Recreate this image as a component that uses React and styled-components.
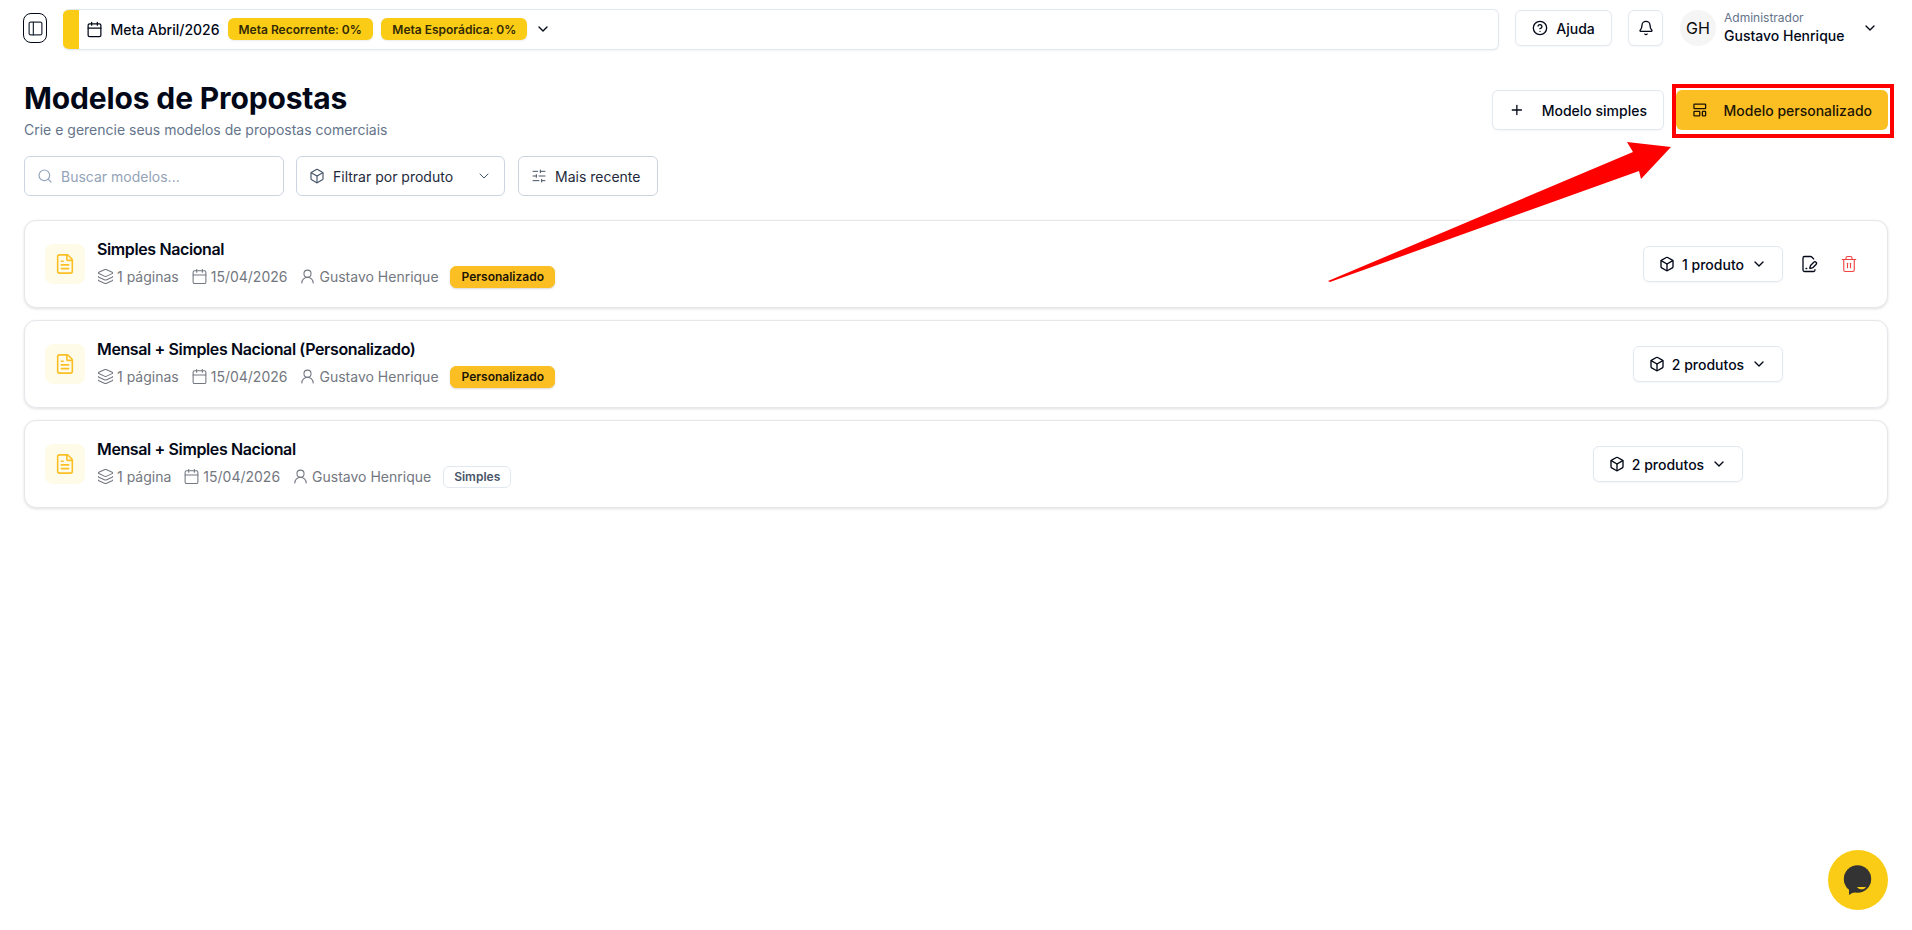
import React from "react";
import styled, { createGlobalStyle } from "styled-components";
import {
  PanelLeft, Calendar, ChevronDown, CircleHelp, Bell, Plus, LayoutTemplate, Search, Box,
  SlidersHorizontal, FileText, Layers, UserRound, FilePenLine, Trash2,
} from "lucide-react";

const Global = createGlobalStyle`
  html, body { margin: 0; padding: 0; background: #fff; }
  body { font-family: Inter, "Liberation Sans", sans-serif; color: #020817; height: 930px; overflow: hidden; }
  * { box-sizing: border-box; }
`;

const Page = styled.div`
  position: relative;
  width: 1912px;
  height: 930px;
  background: #fff;
`;

const Header = styled.header`
  display: flex;
  align-items: center;
  height: 56px;
  padding: 0 34px 0 23px;
`;

const ToggleButton = styled.button`
  display: flex;
  align-items: center;
  justify-content: center;
  flex: none;
  width: 24px;
  height: 30px;
  padding: 0;
  margin-right: 16px;
  background: #fff;
  border: 1px solid #020817;
  border-radius: 8px;
  color: #27303f;
`;

const GoalBar = styled.div`
  flex: 1;
  display: flex;
  align-items: center;
  height: 41px;
  margin-top: 2px;
  border: 1px solid #e2e8f0;
  border-left: 0;
  border-radius: 6px;
  overflow: hidden;
  box-shadow: 0 1px 2px rgba(0, 0, 0, 0.05);
`;

const GoalStripe = styled.span`
  width: 16px;
  align-self: stretch;
  margin: -1px 7px -1px 0;
  background: #facc15;
`;

const GoalLabel = styled.span`
  display: flex;
  align-items: center;
  gap: 7.5px;
  font-size: 14px;
  font-weight: 500;
  color: #020817;
  margin-right: 8px;
`;

const GoalBadge = styled.span`
  display: flex;
  align-items: center;
  height: 22px;
  padding: 0 11px;
  margin-right: 8.5px;
  border-radius: 6px;
  background: #facc15;
  color: #332a04;
  font-size: 12px;
  font-weight: 600;
  box-shadow: 0 1px 2px rgba(0, 0, 0, 0.08);
`;

const GoalChevron = styled.span`
  display: flex;
  margin-left: -1px;
  color: #020817;
`;

const OutlineButton = styled.button`
  display: flex;
  align-items: center;
  justify-content: center;
  gap: ${(p) => p.$gap || 8}px;
  height: ${(p) => p.$h || 36}px;
  padding: 0 ${(p) => p.$pad ?? 16}px;
  background: #fff;
  border: 1px solid #e2e8f0;
  border-radius: 6px;
  font-family: inherit;
  font-size: 14px;
  font-weight: 500;
  color: #020817;
  white-space: nowrap;
  box-shadow: 0 1px 2px rgba(0, 0, 0, 0.04);
`;

const HelpButton = styled(OutlineButton)`
  width: 97px;
  margin-left: 16px;
`;

const BellButton = styled(OutlineButton)`
  width: 35px;
  margin-left: 16px;
`;

const UserArea = styled.div`
  display: flex;
  align-items: center;
  margin-left: 17px;
`;

const Avatar = styled.span`
  display: flex;
  align-items: center;
  justify-content: center;
  width: 36px;
  height: 36px;
  border-radius: 50%;
  background: #f5f5f5;
  font-size: 16px;
  color: #0a0a0a;
`;

const UserText = styled.div`
  display: flex;
  flex-direction: column;
  width: 138px;
  margin-left: 8px;
`;

const UserRole = styled.span`
  font-size: 12px;
  line-height: 16px;
  color: #64748b;
`;

const UserName = styled.span`
  font-size: 14px;
  line-height: 20px;
  font-weight: 500;
  color: #020817;
`;

const Main = styled.main`
  padding: 0 24px;
`;

const TitleRow = styled.div`
  display: flex;
  justify-content: space-between;
  align-items: flex-start;
  padding-top: 24px;
`;

const Title = styled.h1`
  margin: 0;
  font-size: 30px;
  line-height: 36px;
  font-weight: 700;
  letter-spacing: -0.15px;
  color: #020817;
`;

const Subtitle = styled.p`
  margin: 4px 0 0;
  font-size: 14px;
  line-height: 20px;
  color: #64748b;
`;

const TitleActions = styled.div`
  display: flex;
  gap: 12px;
  padding-top: 10px;
`;

const SimpleButton = styled(OutlineButton)`
  width: 172px;
  gap: 17px;
`;

const Highlighted = styled.div`
  position: relative;
  &::after {
    content: "";
    position: absolute;
    left: -4px;
    right: -6px;
    top: -6px;
    bottom: -8px;
    border: 4px solid #ff0000;
    pointer-events: none;
  }
`;

const PrimaryButton = styled.button`
  display: flex;
  align-items: center;
  gap: 16px;
  width: 212px;
  height: 40px;
  padding: 0 16px;
  border: 0;
  border-radius: 6px;
  background: #fbbf24;
  font-family: inherit;
  font-size: 14px;
  font-weight: 500;
  color: #1c1503;
  white-space: nowrap;
`;

const Toolbar = styled.div`
  display: flex;
  gap: 12px;
  margin-top: 16px;
`;

const SearchBox = styled.div`
  display: flex;
  align-items: center;
  gap: 8px;
  width: 260px;
  height: 40px;
  padding: 0 12px;
  border: 1px solid #cbd5e1;
  border-radius: 6px;
  font-size: 14px;
  color: #94a3b8;
`;

const FilterSelect = styled.div`
  display: flex;
  align-items: center;
  width: 209px;
  height: 40px;
  padding: 0 12px;
  border: 1px solid #cbd5e1;
  border-radius: 6px;
  font-size: 14px;
  color: #1e293b;
  svg { color: #475569; flex: none; }
`;

const FilterText = styled.span`
  flex: 1;
  margin-left: 8px;
`;

const SortButton = styled.div`
  display: flex;
  align-items: center;
  gap: 8px;
  width: 140px;
  height: 40px;
  margin-left: 1px;
  padding: 0 12px;
  border: 1px solid #cbd5e1;
  border-radius: 6px;
  font-size: 14px;
  color: #1e293b;
  svg { color: #475569; }
`;

const CardList = styled.div`
  display: flex;
  flex-direction: column;
  gap: 12px;
  margin-top: 24px;
`;

const Card = styled.article`
  display: flex;
  align-items: center;
  height: 88px;
  padding: 0 21px 0 20px;
  border: 1px solid #e5e7eb;
  border-radius: 12px;
  background: #fff;
  box-shadow: 0 1px 3px rgba(0, 0, 0, 0.12);
`;

const DocIcon = styled.span`
  display: flex;
  align-items: center;
  justify-content: center;
  width: 40px;
  height: 40px;
  flex: none;
  border-radius: 8px;
  background: #fefce8;
  color: #fbbf24;
`;

const CardBody = styled.div`
  flex: 1;
  margin-left: 12px;
  padding-bottom: 3.5px;
`;

const CardTitle = styled.h3`
  margin: 0;
  font-size: 16px;
  line-height: 24px;
  font-weight: 600;
  letter-spacing: -0.38px;
  color: #020817;
`;

const MetaRow = styled.div`
  display: flex;
  align-items: center;
  gap: 12px;
  margin-top: 4.5px;
  font-size: 14px;
  color: #737780;
`;

const MetaItem = styled.span`
  display: flex;
  align-items: center;
  gap: 3px;
`;

const TypeBadge = styled.span`
  display: flex;
  align-items: center;
  height: 22px;
  padding: 0 10px 0 ${(p) => (p.$custom ? 10.5 : 10)}px;
  margin-left: ${(p) => (p.$custom ? -0.5 : 0)}px;
  border-radius: 6px;
  font-size: 12px;
  font-weight: 600;
  background: ${(p) => (p.$custom ? "#fbbf24" : "#fff")};
  color: ${(p) => (p.$custom ? "#1c1503" : "#475569")};
  border: 1px solid ${(p) => (p.$custom ? "#fbbf24" : "#e2e8f0")};
  box-shadow: ${(p) => (p.$custom ? "0 1px 2px rgba(0,0,0,.15)" : "none")};
`;

const ProductButton = styled(OutlineButton)`
  width: ${(p) => p.$w}px;
  gap: 7px;
  padding: 0;
`;

const Actions = styled.div`
  display: flex;
  gap: 8px;
  flex: none;
  width: ${(p) => p.$w}px;
  padding-left: 10px;
`;

const IconAction = styled.button`
  display: flex;
  align-items: center;
  justify-content: center;
  width: 32px;
  height: 32px;
  padding: 0;
  border: 0;
  background: transparent;
  color: ${(p) => (p.$danger ? "#ef4444" : "#020817")};
`;

const ChatFab = styled.button`
  position: absolute;
  left: 1828px;
  top: 850px;
  display: flex;
  align-items: center;
  justify-content: center;
  width: 60px;
  height: 60px;
  padding: 0;
  border: 0;
  border-radius: 50%;
  background: #facc15;
`;

const ArrowOverlay = styled.svg`
  position: absolute;
  left: 1320px;
  top: 135px;
  pointer-events: none;
`;

const models = [
  { title: "Simples Nacional", pages: "1 páginas", custom: true, product: "1 produto", w: 140, actions: true, slot: 83 },
  { title: "Mensal + Simples Nacional (Personalizado)", pages: "1 páginas", custom: true, product: "2 produtos", w: 150, slot: 83 },
  { title: "Mensal + Simples Nacional", pages: "1 página", custom: false, product: "2 produtos", w: 150, slot: 123 },
];

export default function App() {
  return (
    <Page>
      <Global />
      <Header>
        <ToggleButton><PanelLeft size={17} strokeWidth={1.75} /></ToggleButton>
        <GoalBar>
          <GoalStripe />
          <GoalLabel><Calendar size={17} strokeWidth={1.75} />Meta Abril/2026</GoalLabel>
          <GoalBadge>Meta Recorrente: 0%</GoalBadge>
          <GoalBadge>Meta Esporádica: 0%</GoalBadge>
          <GoalChevron><ChevronDown size={16} /></GoalChevron>
        </GoalBar>
        <HelpButton><CircleHelp size={16} />Ajuda</HelpButton>
        <BellButton $pad={0}><Bell size={16} /></BellButton>
        <UserArea>
          <Avatar>GH</Avatar>
          <UserText>
            <UserRole>Administrador</UserRole>
            <UserName>Gustavo Henrique</UserName>
          </UserText>
          <ChevronDown size={16} />
        </UserArea>
      </Header>
      <Main>
        <TitleRow>
          <div>
            <Title>Modelos de Propostas</Title>
            <Subtitle>Crie e gerencie seus modelos de propostas comerciais</Subtitle>
          </div>
          <TitleActions>
            <SimpleButton $h={40}><Plus size={16} />Modelo simples</SimpleButton>
            <Highlighted>
              <PrimaryButton><LayoutTemplate size={16} />Modelo personalizado</PrimaryButton>
            </Highlighted>
          </TitleActions>
        </TitleRow>
        <Toolbar>
          <SearchBox><Search size={16} strokeWidth={1.75} />Buscar modelos...</SearchBox>
          <FilterSelect>
            <Box size={16} strokeWidth={1.75} />
            <FilterText>Filtrar por produto</FilterText>
            <ChevronDown size={16} strokeWidth={1.5} />
          </FilterSelect>
          <SortButton><SlidersHorizontal size={16} strokeWidth={1.5} />Mais recente</SortButton>
        </Toolbar>
        <CardList>
          {models.map((m) => (
            <Card key={m.title}>
              <DocIcon><FileText size={22} strokeWidth={1.75} /></DocIcon>
              <CardBody>
                <CardTitle>{m.title}</CardTitle>
                <MetaRow>
                  <MetaItem><Layers size={17} strokeWidth={1.5} />{m.pages}</MetaItem>
                  <MetaItem><Calendar size={17} strokeWidth={1.5} />15/04/2026</MetaItem>
                  <MetaItem><UserRound size={17} strokeWidth={1.5} />Gustavo Henrique</MetaItem>
                  <TypeBadge $custom={m.custom}>{m.custom ? "Personalizado" : "Simples"}</TypeBadge>
                </MetaRow>
              </CardBody>
              <ProductButton $w={m.w}><Box size={16} />{m.product}<ChevronDown size={16} /></ProductButton>
              <Actions $w={m.slot}>
                {m.actions && (
                  <>
                    <IconAction><FilePenLine size={18} strokeWidth={1.75} /></IconAction>
                    <IconAction $danger><Trash2 size={18} strokeWidth={1.5} /></IconAction>
                  </>
                )}
              </Actions>
            </Card>
          ))}
        </CardList>
      </Main>
      <ArrowOverlay width="360" height="155" viewBox="1320 135 360 155">
        <polygon points="1328,281 1633,152 1627,142 1671,147 1641,179 1639,171 1330,282" fill="#ff0000" />
      </ArrowOverlay>
      <ChatFab>
        <svg width="34" height="34" viewBox="0 0 34 34">
          <circle cx="16.5" cy="16" r="13.7" fill="#333" />
          <path d="M8 26l4-2 1.5 5.5-2.3.6-3.2 2Z" fill="#333" />
          <path d="M16 24h9c-1 1.5-2.4 2.3-4.4 2.3-2 0-3.6-.8-4.6-2.3Z" fill="#facc15" />
        </svg>
      </ChatFab>
    </Page>
  );
}
